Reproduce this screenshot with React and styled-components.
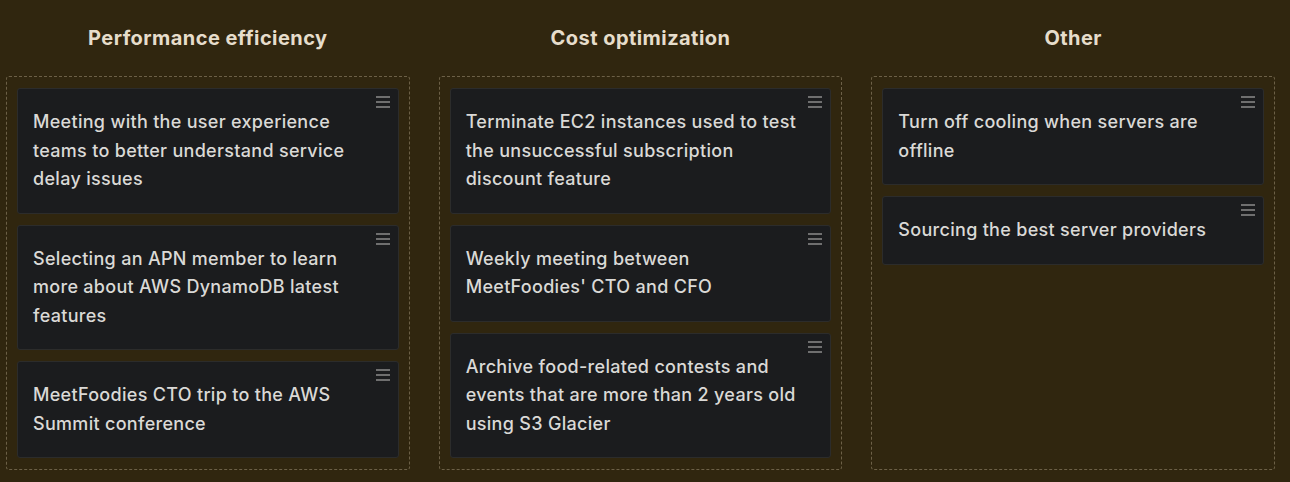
import React from "react";
import styled, { createGlobalStyle } from "styled-components";

const GlobalStyle = createGlobalStyle`
  html, body {
    margin: 0;
    padding: 0;
    background: #30260f;
  }
  body {
    font-family: Inter, "Noto Sans", sans-serif;
  }
`;

const Board = styled.div`
  display: grid;
  grid-template-columns: repeat(3, 1fr);
  column-gap: 29px;
  padding: 0 15px 12px 6px;
  width: 1290px;
  box-sizing: border-box;
  height: 482px;
`;

const Column = styled.section`
  display: flex;
  flex-direction: column;
  min-width: 0;
`;

const Title = styled.h2`
  margin: 26px 0 26px;
  font-size: 20px;
  line-height: 24px;
  font-weight: 700;
  letter-spacing: 0.45px;
  color: #e6ddcb;
  text-align: center;
`;

const Lane = styled.div`
  flex: 1;
  display: flex;
  flex-direction: column;
  gap: 11px;
  padding: 11px 10px;
  border: 1px dashed #6c6047;
  border-radius: 3px;
`;

const Card = styled.div`
  position: relative;
  background: #1b1c1e;
  border: 1px solid #2c2c2b;
  border-radius: 3px;
  padding: 19px 15px;
`;

const CardText = styled.p`
  margin: 0;
  font-size: 18px;
  line-height: 28.5px;
  font-weight: 500;
  letter-spacing: 0.3px;
  color: #dad9d6;
  max-width: 345px;
`;

const Handle = styled.span`
  position: absolute;
  top: 7px;
  right: 8px;
  width: 14px;
  height: 12px;
  display: flex;
  flex-direction: column;
  justify-content: space-between;

  i {
    display: block;
    height: 2px;
    background: #6f6f6f;
  }
`;

const columns = [
  {
    title: "Performance efficiency",
    cards: [
      "Meeting with the user experience teams to better understand service delay issues",
      "Selecting an APN member to learn more about AWS DynamoDB latest features",
      "MeetFoodies CTO trip to the AWS Summit conference",
    ],
  },
  {
    title: "Cost optimization",
    cards: [
      "Terminate EC2 instances used to test the unsuccessful subscription discount feature",
      "Weekly meeting between MeetFoodies' CTO and CFO",
      "Archive food-related contests and events that are more than 2 years old using S3 Glacier",
    ],
  },
  {
    title: "Other",
    cards: [
      "Turn off cooling when servers are offline",
      "Sourcing the best server providers",
    ],
  },
];

export default function App() {
  return (
    <>
      <GlobalStyle />
      <Board>
        {columns.map((col) => (
          <Column key={col.title}>
            <Title>{col.title}</Title>
            <Lane>
              {col.cards.map((text) => (
                <Card key={text}>
                  <Handle>
                    <i />
                    <i />
                    <i />
                  </Handle>
                  <CardText>{text}</CardText>
                </Card>
              ))}
            </Lane>
          </Column>
        ))}
      </Board>
    </>
  );
}
